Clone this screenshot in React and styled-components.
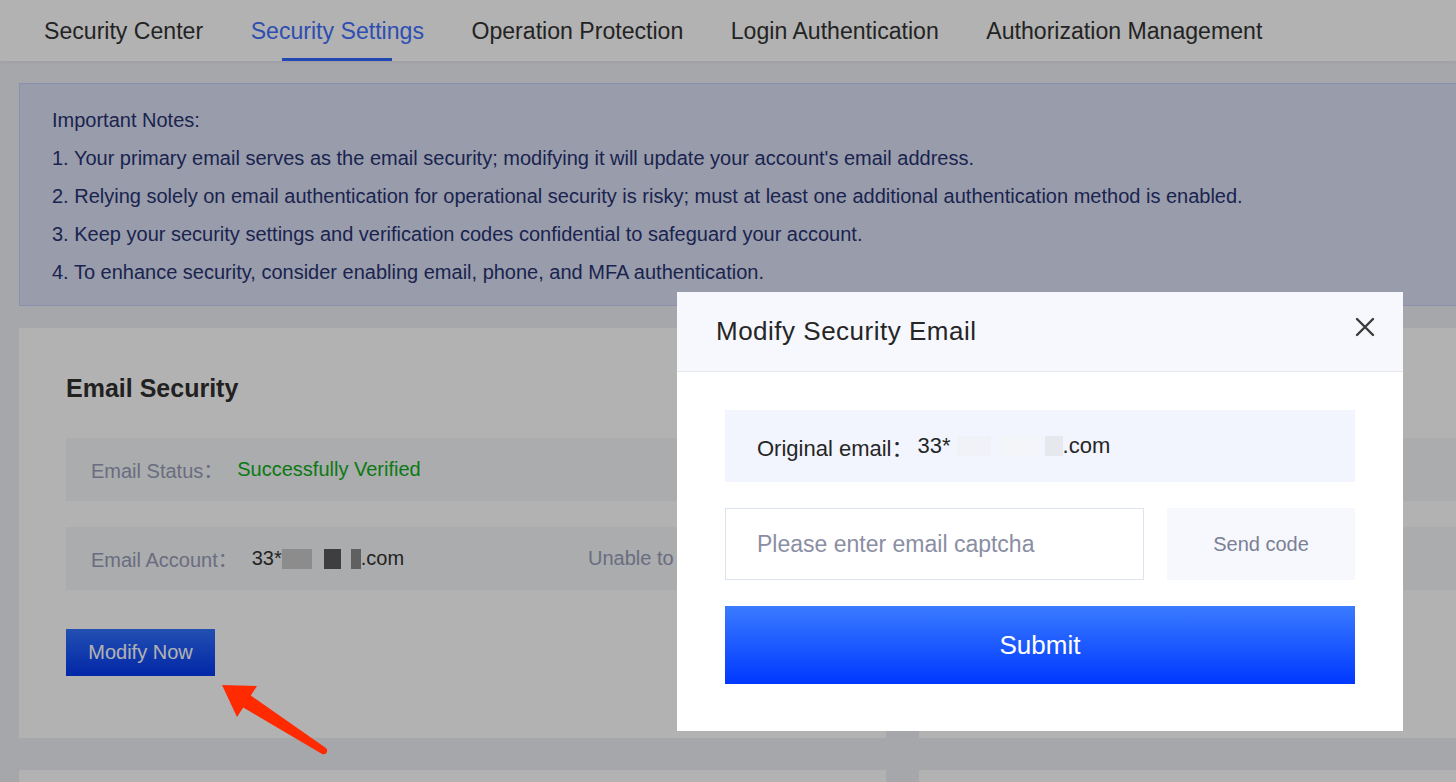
import styled, { createGlobalStyle } from 'styled-components'

const GlobalStyle = createGlobalStyle`
  body {
    margin: 0;
    overflow: hidden;
    background: #edeff5;
    font-family: "Liberation Sans", Arial, "Noto Sans CJK SC", sans-serif;
    color: #303030;
  }
`

const tabs = ['Security Center', 'Security Settings', 'Operation Protection', 'Login Authentication', 'Authorization Management']

const notes = [
  'Important Notes:',
  "1. Your primary email serves as the email security; modifying it will update your account's email address.",
  '2. Relying solely on email authentication for operational security is risky; must at least one additional authentication method is enabled.',
  '3. Keep your security settings and verification codes confidential to safeguard your account.',
  '4. To enhance security, consider enabling email, phone, and MFA authentication.'
]

export default function App() {
  return <Page>
    <GlobalStyle />
    <TabBar>
      {tabs.map(t => <Tab key={t} $active={t === 'Security Settings'}>{t}</Tab>)}
    </TabBar>
    <Content>
      <Notice>
        {notes.map(n => <NoteLine key={n}>{n}</NoteLine>)}
      </Notice>
      <CardGrid>
        <Card>
          <CardTitle>Email Security</CardTitle>
          <InfoRow>
            <Field>
              <Label>Email Status：</Label>
              <Value $tone='success'>Successfully Verified</Value>
            </Field>
          </InfoRow>
          <InfoRow>
            <Field>
              <Label>Email Account：</Label>
              <Value>33*<Blur $w={30} $c='#c9c9cb' /><Blur $w={17} $c='#5a5a5c' $gap={12} /><Blur $w={10} $c='#8a8a8c' $gap={10} />.com</Value>
            </Field>
            <Label>Unable to receive?</Label>
          </InfoRow>
          <PrimaryButton>Modify Now</PrimaryButton>
        </Card>
        <Card>
          <CardTitle>Phone Security</CardTitle>
          <InfoRow>
            <Field>
              <Label>Phone Status：</Label>
              <Value $tone='success'>Successfully Verified</Value>
            </Field>
          </InfoRow>
          <InfoRow>
            <Field>
              <Label>Phone Number：</Label>
              <Value>138****6621</Value>
            </Field>
            <Label>Unable to receive?</Label>
          </InfoRow>
        </Card>
        <Card />
        <Card />
      </CardGrid>
    </Content>

    <Mask />

    <Modal>
      <ModalHeader>
        <ModalTitle>Modify Security Email</ModalTitle>
        <CloseButton aria-label='close'>
          <svg width='20' height='20' viewBox='0 0 20 20'>
            <path d='M2 2 L18 18 M18 2 L2 18' stroke='#3a3a3a' strokeWidth='2.4' strokeLinecap='round' fill='none' />
          </svg>
        </CloseButton>
      </ModalHeader>
      <ModalBody>
        <OriginalBox>
          Original email：<EmailText>33*</EmailText>
          <Blur $w={34} $c='#f0f2f7' $gap={6} /><Blur $w={40} $c='#f4f5f9' $gap={8} /><Blur $w={18} $c='#e6e8ee' $gap={6} />.com
        </OriginalBox>
        <CodeRow>
          <CodeInput placeholder='Please enter email captcha' />
          <SendButton>Send code</SendButton>
        </CodeRow>
        <SubmitButton>Submit</SubmitButton>
      </ModalBody>
    </Modal>

    <Arrow viewBox='215 678 115 80' width='115' height='80'>
      <path
        d='M222 685 L257 686 L250.8 695.6 L325.9 748.1 A3.5 3.5 0 0 1 322.1 753.9 L243.2 707.4 L237 717 Z'
        fill='#ff2a00'
      />
    </Arrow>
  </Page>
}

const Page = styled.div`
  position: relative;
  width: 100vw;
  height: 100vh;
  overflow: hidden;
`
const TabBar = styled.nav`
  display: flex;
  align-items: stretch;
  gap: 47.5px;
  height: 61px;
  padding-left: 44px;
  background: #fff;
  box-shadow: 0 1px 3px rgba(0, 0, 0, .06);
`
const Tab = styled.div`
  position: relative;
  display: flex;
  align-items: center;
  padding-top: 2px;
  font-size: 23.1px;
  white-space: nowrap;
  color: ${p => p.$active ? '#4470ff' : '#333'};

  &::after {
    content: '';
    display: ${p => p.$active ? 'block' : 'none'};
    position: absolute;
    left: 50%;
    bottom: 0;
    width: 110px;
    height: 3px;
    margin-left: -55px;
    background: #3366ff;
  }
`
const Content = styled.main`
  width: 1767px;
  padding: 22px 0 0 19px;
`
const Notice = styled.section`
  padding: 17px 32px 14px;
  background: #dce0f5;
  border: 1px solid #c5cefe;
`
const NoteLine = styled.p`
  margin: 0;
  font-size: 20px;
  line-height: 38px;
  color: #283372;
  white-space: nowrap;
`
const CardGrid = styled.div`
  display: grid;
  grid-template-columns: 867px 867px;
  grid-auto-rows: 410px;
  column-gap: 33px;
  row-gap: 32px;
  margin-top: 22px;
`
const Card = styled.section`
  display: flex;
  flex-direction: column;
  align-items: flex-start;
  padding: 44px 47px 0;
  background: #fff;
`
const CardTitle = styled.h2`
  margin: 0 0 34px;
  font-size: 25px;
  line-height: 32px;
  font-weight: 600;
  color: #303030;
`
const InfoRow = styled.div`
  display: flex;
  align-items: center;
  align-self: stretch;
  height: 63px;
  padding-left: 25px;
  margin-bottom: 26px;
  background: #f4f6fa;
  font-size: 20px;
`
const Field = styled.div`
  display: flex;
  align-items: center;
  flex: 0 0 497px;
`
const Label = styled.span`
  color: #999db7;
  white-space: nowrap;
`
const Value = styled.span`
  display: inline-flex;
  align-items: center;
  margin-left: 14px;
  color: ${p => p.$tone === 'success' ? '#10ae1b' : '#333'};
  white-space: nowrap;
`
const EmailText = styled.span`
  margin-left: 4px;
`
const Blur = styled.span`
  display: inline-block;
  width: ${p => p.$w}px;
  height: 20px;
  margin-left: ${p => p.$gap || 0}px;
  background: ${p => p.$c};
`
const PrimaryButton = styled.button`
  margin-top: 13px;
  width: 149px;
  height: 47px;
  border: none;
  background: linear-gradient(180deg, #3372ff, #0338f0);
  color: #fff;
  font-family: inherit;
  font-size: 20px;
`
const Mask = styled.div`
  position: fixed;
  inset: 0;
  background: rgba(0, 0, 0, .3);
`
const Modal = styled.div`
  position: absolute;
  left: 677px;
  top: 292px;
  width: 726px;
  background: #fff;
`
const ModalHeader = styled.header`
  display: flex;
  align-items: center;
  justify-content: space-between;
  height: 79px;
  padding: 0 28px 0 39px;
  background: #f6f8fd;
  border-bottom: 1px solid #e3e6ee;
`
const ModalTitle = styled.h3`
  margin: 0;
  font-size: 26px;
  font-weight: 400;
  letter-spacing: .5px;
  color: #262626;
`
const CloseButton = styled.button`
  display: flex;
  padding: 0;
  margin-top: -10px;
  border: none;
  background: none;
`
const ModalBody = styled.div`
  display: flex;
  flex-direction: column;
  gap: 26px;
  padding: 38px 48px 47px;
`
const OriginalBox = styled.div`
  display: flex;
  align-items: center;
  height: 72px;
  padding-left: 32px;
  background: #f2f5fd;
  font-size: 22px;
  color: #262626;
`
const CodeRow = styled.div`
  display: flex;
  gap: 23px;
  height: 72px;
`
const CodeInput = styled.input`
  flex: 0 0 419px;
  box-sizing: border-box;
  padding: 0 31px;
  border: 1px solid #dde3ef;
  outline: none;
  font-family: inherit;
  font-size: 23px;
  color: #333;

  &::placeholder {
    color: #8a8ea3;
  }
`
const SendButton = styled.button`
  flex: 1;
  border: none;
  background: #f6f8fd;
  color: #7b8094;
  font-family: inherit;
  font-size: 20px;
`
const SubmitButton = styled.button`
  height: 78px;
  border: none;
  background: linear-gradient(180deg, #3a7bff, #0038ff);
  color: #fff;
  font-family: inherit;
  font-size: 26px;
`
const Arrow = styled.svg`
  position: absolute;
  left: 215px;
  top: 678px;
`
